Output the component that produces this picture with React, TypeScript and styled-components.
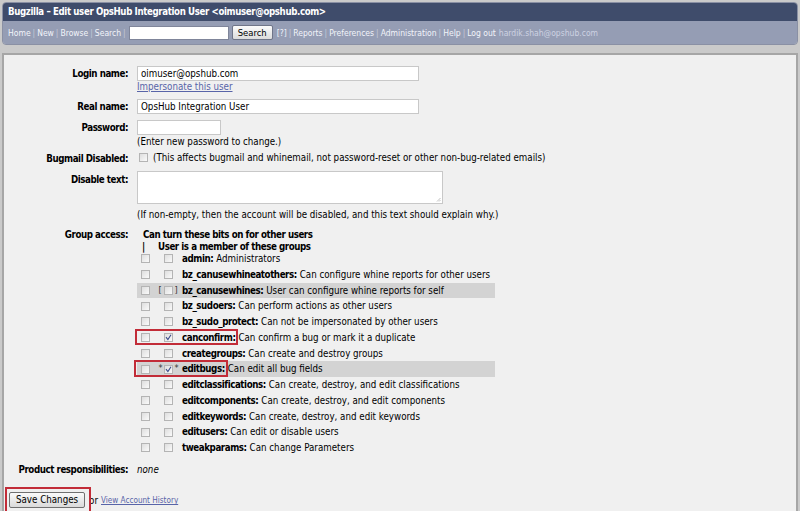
import styled, { createGlobalStyle } from 'styled-components';

const GlobalStyle = createGlobalStyle`
  html, body {
    margin: 0;
    padding: 0;
    background: #cacaca;
  }
  body {
    font-family: 'DejaVu Sans Condensed', 'DejaVu Sans', Verdana, sans-serif;
    font-stretch: condensed;
    font-size: 9.7px;
    color: #000;
  }
  b {
    letter-spacing: -0.44px;
  }
`;

const Page = styled.div`
  width: 800px;
  height: 511px;
  overflow: hidden;
  padding: 2px 2px 0 2px;
  box-sizing: border-box;
  display: flex;
  flex-direction: column;
`;

const Header = styled.header`
  flex-shrink: 0;
  border-radius: 4px;
  overflow: hidden;
  border: 1px solid #8a90a4;
`;

const TitleBar = styled.div`
  background: #3f4c6b;
  color: #fff;
  font-weight: bold;
  font-size: 9.6px;
  letter-spacing: -0.36px;
  height: 18px;
  line-height: 18px;
  padding-left: 5px;
`;

const NavBar = styled.nav`
  background: #959db4;
  height: 23px;
  display: flex;
  align-items: center;
  padding-left: 5px;
  font-size: 8.5px;
  color: #eef0f6;
  white-space: nowrap;
`;

const NavLink = styled.a`
  color: #f2f4fa;
  text-decoration: none;
`;

const Sep = styled.span`
  color: #c4c9d8;
  margin: 0 2px;
`;

const Who = styled.span`
  color: #cdd2e2;
  margin-left: 3px;
`;

const SearchInput = styled.input`
  width: 100px;
  height: 14px;
  box-sizing: border-box;
  border: 1px solid #7f859a;
  background: #fff;
  margin: 0 3px 0 1px;
  padding: 0;
`;

const SearchButton = styled.button`
  font: inherit;
  font-size: 9.4px;
  height: 15px;
  padding: 0 5px;
  margin: 0 4px 0 0;
  border: 1px solid #6f7588;
  border-radius: 2px;
  background: linear-gradient(#fbfbfb, #dcdcdc);
  color: #000;
  line-height: 12px;
`;

const Panel = styled.main`
  margin-top: 8px;
  flex: 1;
  min-height: 0;
  background: #f0f0f0;
  border: 2px solid #a6a6a6;
  border-bottom: none;
  padding: 11px 0 0 0;
`;

const Form = styled.div`
  display: grid;
  grid-template-columns: 124px 1fr;
  column-gap: 9px;
  row-gap: 6px;
  align-items: start;
  line-height: 11.5px;
`;

const Label = styled.div<{ $top?: number }>`
  font-weight: bold;
  letter-spacing: -0.44px;
  text-align: right;
  padding-top: ${p => p.$top ?? 2}px;
  white-space: nowrap;
`;

const Field = styled.div<{ $mb?: number }>`
  display: flex;
  flex-direction: column;
  align-items: flex-start;
  margin-bottom: ${p => p.$mb ?? 0}px;
`;

const TextInput = styled.input<{ $w: number }>`
  width: ${p => p.$w}px;
  height: 15px;
  box-sizing: border-box;
  border: 1px solid #c8c8c8;
  background: #fff;
  font: inherit;
  padding: 0 0 0 3px;
  margin: 0;
`;

const TextArea = styled.div`
  position: relative;
  width: 306px;
  height: 33px;
  box-sizing: border-box;
  border: 1px solid #c8c8c8;
  background: #fff;
  margin-bottom: 5px;
`;

const Grip = styled.svg`
  position: absolute;
  right: 1px;
  bottom: 1px;
`;

const Link = styled.a`
  color: #5864a8;
  text-decoration: underline;
`;

const Note = styled.span`
  margin-top: 1px;
`;

const Inline = styled.div`
  display: flex;
  align-items: center;
  gap: 5px;
  padding-left: 2px;
  padding-top: 2px;
`;

const Box = styled.span`
  display: inline-flex;
  align-items: center;
  justify-content: center;
  width: 9px;
  height: 9px;
  box-sizing: border-box;
  border: 1px solid #b4b4b4;
  background: linear-gradient(135deg, #dedede, #fafafa);
  flex: none;
`;

const Check = ({ checked }: { checked?: boolean }) => (
  <Box>
    {checked && (
      <svg width="7" height="7" viewBox="0 0 7 7">
        <path d="M1 3.2 L2.9 5.6 L6 0.8" fill="none" stroke="#3a4a8a" strokeWidth="1.1" />
      </svg>
    )}
  </Box>
);

const GroupHead = styled.div`
  font-weight: bold;
  letter-spacing: -0.44px;
  padding-top: 3px;
  line-height: 11.5px;
  margin-bottom: -1px;
`;

const HeadLine = styled.div<{ $indent: number }>`
  padding-left: ${p => p.$indent}px;
  white-space: nowrap;
`;

const Bar = styled.span`
  display: inline-block;
  width: 21px;
  padding-left: 5px;
  box-sizing: border-box;
  color: #000;
`;

const GroupRow = styled.div<{ $shade?: boolean }>`
  position: relative;
  width: 358px;
  height: 15.75px;
  display: flex;
  align-items: center;
  background: ${p => (p.$shade ? '#d3d3d3' : 'transparent')};
  white-space: nowrap;
`;

const Cell1 = styled.span`
  width: 17px;
  padding-left: 4px;
  box-sizing: border-box;
  display: flex;
`;

const Cell2 = styled.span`
  width: 28px;
  display: flex;
  align-items: center;
  justify-content: center;
  gap: 2px;
  color: #333;
`;

const Mark = styled.span`
  font-size: 9px;
  width: 3px;
  text-align: center;
`;

const GroupName = styled.b`
  margin-right: 3px;
`;

const Highlight = styled.span<{ $left: number; $width: number; $top: number; $height: number }>`
  position: absolute;
  left: ${p => p.$left}px;
  top: ${p => p.$top}px;
  width: ${p => p.$width}px;
  height: ${p => p.$height}px;
  border: 2.5px solid #c22c38;
  box-sizing: border-box;
  pointer-events: none;
`;

const Italic = styled.i`
  padding-top: 2px;
`;

const Footer = styled.div`
  position: relative;
  display: flex;
  align-items: center;
  gap: 3px;
  margin-top: 17px;
  padding-left: 5px;
`;

const SaveButton = styled.button`
  font: inherit;
  height: 16px;
  padding: 0 6px;
  margin-right: 1px;
  border: 1px solid #707070;
  border-radius: 2px;
  background: linear-gradient(#fafafa, #dadada);
  color: #000;
  line-height: 12px;
`;

const SmallLink = styled(Link)`
  font-size: 8.1px;
`;

const FooterBox = styled.span`
  position: absolute;
  left: 1px;
  top: -5px;
  width: 86px;
  height: 26px;
  border: 2.5px solid #c22c38;
  box-sizing: border-box;
`;

type Group = {
  name: string;
  desc: string;
  member?: boolean;
  shade?: boolean;
  mark?: [string, string];
  box?: { left: number; width: number; top: number; height: number };
};

const groups: Group[] = [
  { name: 'admin', desc: 'Administrators' },
  { name: 'bz_canusewhineatothers', desc: 'Can configure whine reports for other users' },
  { name: 'bz_canusewhines', desc: 'User can configure whine reports for self', shade: true, mark: ['[', ']'] },
  { name: 'bz_sudoers', desc: 'Can perform actions as other users' },
  { name: 'bz_sudo_protect', desc: 'Can not be impersonated by other users' },
  {
    name: 'canconfirm',
    desc: 'Can confirm a bug or mark it a duplicate',
    member: true,
    box: { left: -2, width: 103, top: -1, height: 16 },
  },
  { name: 'creategroups', desc: 'Can create and destroy groups' },
  {
    name: 'editbugs',
    desc: 'Can edit all bug fields',
    member: true,
    shade: true,
    mark: ['*', '*'],
    box: { left: -3, width: 94, top: -1, height: 17 },
  },
  { name: 'editclassifications', desc: 'Can create, destroy, and edit classifications' },
  { name: 'editcomponents', desc: 'Can create, destroy, and edit components' },
  { name: 'editkeywords', desc: 'Can create, destroy, and edit keywords' },
  { name: 'editusers', desc: 'Can edit or disable users' },
  { name: 'tweakparams', desc: 'Can change Parameters' },
];

const navLeft = ['Home', 'New', 'Browse', 'Search'];
const navRight = ['Reports', 'Preferences', 'Administration', 'Help'];

export default function App() {
  return (
    <>
      <GlobalStyle />
      <Page>
        <Header>
          <TitleBar>Bugzilla – Edit user OpsHub Integration User &lt;oimuser@opshub.com&gt;</TitleBar>
          <NavBar>
            {navLeft.map(item => (
              <span key={item}>
                <NavLink>{item}</NavLink>
                <Sep>|</Sep>
              </span>
            ))}
            <SearchInput />
            <SearchButton>Search</SearchButton>
            <NavLink>[?]</NavLink>
            {navRight.map(item => (
              <span key={item}>
                <Sep>|</Sep>
                <NavLink>{item}</NavLink>
              </span>
            ))}
            <Sep>|</Sep>
            <NavLink>Log out</NavLink>
            <Who>hardik.shah@opshub.com</Who>
          </NavBar>
        </Header>

        <Panel>
          <Form>
            <Label>Login name:</Label>
            <Field>
              <TextInput $w={282} defaultValue="oimuser@opshub.com" />
              <Link>Impersonate this user</Link>
            </Field>

            <Label>Real name:</Label>
            <Field>
              <TextInput $w={282} defaultValue="OpsHub Integration User" />
            </Field>

            <Label>Password:</Label>
            <Field $mb={-3}>
              <TextInput $w={84} type="password" />
              <Note>(Enter new password to change.)</Note>
            </Field>

            <Label $top={3}>Bugmail Disabled:</Label>
            <Inline>
              <Check />
              <span>(This affects bugmail and whinemail, not password-reset or other non-bug-related emails)</span>
            </Inline>

            <Label $top={3}>Disable text:</Label>
            <Field>
              <TextArea>
                <Grip width="5" height="5" viewBox="0 0 5 5">
                  <path d="M4.5 1 L1 4.5 M4.5 3 L3 4.5" stroke="#b0b0b0" strokeWidth="0.8" />
                </Grip>
              </TextArea>
              <span>(If non-empty, then the account will be disabled, and this text should explain why.)</span>
            </Field>

            <Label $top={3}>Group access:</Label>
            <Field>
              <GroupHead>
                <HeadLine $indent={6}>Can turn these bits on for other users</HeadLine>
                <HeadLine $indent={0}>
                  <Bar>|</Bar>
                  User is a member of these groups
                </HeadLine>
              </GroupHead>
              {groups.map(g => (
                <GroupRow key={g.name} $shade={g.shade}>
                  <Cell1>
                    <Check />
                  </Cell1>
                  <Cell2>
                    {g.mark && <Mark>{g.mark[0]}</Mark>}
                    <Check checked={g.member} />
                    {g.mark && <Mark>{g.mark[1]}</Mark>}
                  </Cell2>
                  <GroupName>{g.name}:</GroupName>
                  <span>{g.desc}</span>
                  {g.box && <Highlight $left={g.box.left} $width={g.box.width} $top={g.box.top} $height={g.box.height} />}
                </GroupRow>
              ))}
            </Field>

            <Label>Product responsibilities:</Label>
            <Italic>none</Italic>
          </Form>

          <Footer>
            <SaveButton>Save Changes</SaveButton>
            <span>or</span>
            <SmallLink>View Account History</SmallLink>
            <FooterBox />
          </Footer>
        </Panel>
      </Page>
    </>
  );
}
